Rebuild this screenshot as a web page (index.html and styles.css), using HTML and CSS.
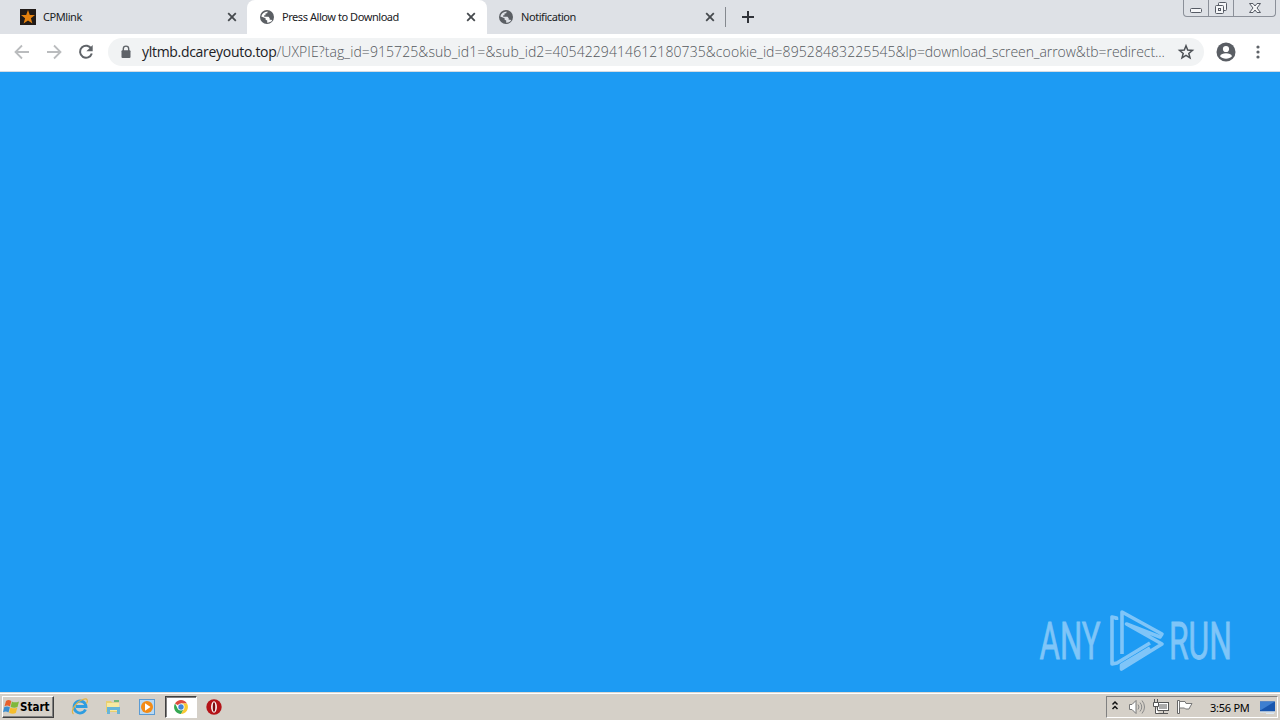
FILE: index.html
```html
<!DOCTYPE html>
<html lang="en">
<head>
    <meta charset="UTF-8">
    <meta name="viewport" content="width=device-width, initial-scale=1.0">
    <title>Press Allow to Download</title>
    <link rel="stylesheet" href="styles.css">
</head>
<body>

    <div class="tabs">
        <div class="tab tab-first">
            <svg class="favicon" viewBox="0 0 16 16"><rect width="16" height="16" fill="#211b18"/><path d="M8 1l1.8 4.9 5.2.2-4.1 3.2 1.5 5.2L8 11.5l-4.4 3 1.5-5.2L1 6.1l5.2-.2z" fill="#e5820f"/></svg>
            <span class="tab-title">CPMlink</span>
            <svg class="close" viewBox="0 0 10 10"><path d="M1.2 1.2l7.6 7.6M8.8 1.2L1.2 8.8"/></svg>
        </div>
        <div class="tab active">
            <svg class="favicon" viewBox="0 0 16 16"><circle cx="8" cy="8" r="7" fill="#5b5f64"/><path d="M2.300 7.500C3 4.600 5.200 2.600 8.700 2.500L8.200 4.200 6.500 4.600V6.300H5.200v1.500h4.300l1.200 1.400v1.500h1.700l.8.900c-1.100 1.400-2.900 2.100-5 2.100v-2.100L6.600 10.700V9.300z" fill="#fff"/></svg>
            <span class="tab-title">Press Allow to Download</span>
            <svg class="close" viewBox="0 0 10 10"><path d="M1.2 1.2l7.6 7.6M8.8 1.2L1.2 8.8"/></svg>
        </div>
        <div class="tab">
            <svg class="favicon" viewBox="0 0 16 16"><circle cx="8" cy="8" r="7" fill="#5b5f64"/><path d="M2.300 7.500C3 4.600 5.200 2.600 8.700 2.500L8.200 4.200 6.500 4.600V6.300H5.200v1.500h4.300l1.200 1.400v1.500h1.700l.8.900c-1.100 1.400-2.900 2.100-5 2.100v-2.100L6.600 10.700V9.300z" fill="#dee1e6"/></svg>
            <span class="tab-title">Notification</span>
            <svg class="close" viewBox="0 0 10 10"><path d="M1.2 1.2l7.6 7.6M8.8 1.2L1.2 8.8"/></svg>
        </div>
        <div class="separator"></div>
        <svg class="plus" viewBox="0 0 12 12"><path d="M6 0v12M0 6h12"/></svg>
        <div class="window-buttons">
            <div class="win-btn"><svg width="14" height="16" viewBox="0 0 14 16"><rect x="1.500" y="8.500" width="11" height="4" rx="1"/></svg></div>
            <div class="win-btn"><svg width="14" height="16" viewBox="0 0 14 16"><rect x="4.500" y="2.500" width="8" height="8" rx="1"/><rect x="1.500" y="5.500" width="8" height="8" rx="1"/><rect x="4.500" y="8.500" width="2" height="2"/></svg></div>
            <div class="win-btn win-close"><svg width="14" height="16" viewBox="0 0 14 16"><path d="M1.500 3.500h3.500l2 2.500 2-2.500h3.500L9 8l3.500 4.500H9L7 10l-2 2.500H1.500L5 8z"/></svg></div>
        </div>
    </div>

    <div class="toolbar">
        <svg class="nav disabled" viewBox="0 0 16 16"><path d="M15 8H2M8 1.500L1.500 8 8 14.500"/></svg>
        <svg class="nav disabled" viewBox="0 0 16 16"><path d="M1 8h13M8 1.500L14.500 8 8 14.500"/></svg>
        <svg class="nav" viewBox="0 0 16 16"><path d="M13.400 5A6 6 0 1 0 13.800 9.500"/><path class="solid" d="M14.700 1v6.300H8.400z"/></svg>
        <div class="address">
            <svg class="lock" viewBox="0 0 10 14"><path d="M2.300 6V3.800a2.700 2.700 0 0 1 5.400 0V6" fill="none" stroke="#5f6368" stroke-width="1.400"/><rect x="0.500" y="5.300" width="9" height="7.700" rx="1" fill="#5f6368"/></svg>
            <div class="url"><span class="domain">yltmb.dcareyouto.top</span><span class="path">/UXPIE?tag_id=915725&amp;sub_id1=&amp;sub_id2=4054229414612180735&amp;cookie_id=89528483225545<span class="path-end">&amp;lp=download_screen_arrow&amp;tb=redirect...</span></span></div>
            <svg class="star" viewBox="0 0 16 16"><path d="M8 1.800l1.700 4.300 4.700.3-3.600 3 1.200 4.500L8 11.400l-4 2.500 1.200-4.500-3.600-3 4.700-.3z"/></svg>
        </div>
        <svg class="profile" viewBox="0 0 20 20"><circle cx="10" cy="10" r="9.500" fill="#5a5e64"/><circle cx="10" cy="7" r="3.100" fill="#fff"/><path d="M4 14.200c1.300-3.800 10.700-3.800 12 0-2.600 3.300-9.400 3.300-12 0z" fill="#fff"/></svg>
        <svg class="menu" viewBox="0 0 4 16"><circle cx="2" cy="3" r="1.600"/><circle cx="2" cy="8" r="1.600"/><circle cx="2" cy="13" r="1.600"/></svg>
    </div>

    <div class="page">
        <svg class="watermark" viewBox="0 0 210 80">
            <g class="mark-text">
                <text x="9.500" y="59" textLength="61" lengthAdjust="spacingAndGlyphs">ANY</text>
                <text x="139" y="59" textLength="63" lengthAdjust="spacingAndGlyphs">RUN</text>
            </g>
            <path class="mark" d="M86.500 20V18L82 17V64L87 63 120 43M92 54V12L132 34L130 37 96.500 24L132 44 91.500 69V65L120 48"/>
        </svg>
    </div>

    <div class="taskbar">
        <div class="start">
            <svg width="17" height="16" viewBox="0 0 17 16"><path d="M3 2C5 .500 6.500 1 8.300 2L7 7.600C5 6.300 3.500 6.400 1.500 7.300z" fill="#e8602c"/><path d="M8.900 2.400c2 1.200 4.400 1.300 7.100 0L14.500 8c-2 1-4.800.9-6.900-.1z" fill="#7fb83c"/><path d="M1.300 8C3 7.200 5 7.100 6.900 8.200L5.500 13.500C3.500 12.200 2 12.300 0 13.200z" fill="#3b8ed0"/><path d="M7.400 8.500c2 1 4.300 1.200 6.900.2l-1.500 5.400c-2 1-4.700.9-6.700-.3z" fill="#f5bd2c"/></svg>
            <span>Start</span>
        </div>
        <div class="launch">
            <svg width="18" height="18" viewBox="0 0 18 18"><path d="M14.500 11.500A6 6 0 1 1 15 8.500H5" fill="none" stroke="#2f9de0" stroke-width="2.800"/><path d="M2.500 16C-1 13 5 4 12 1.500c5-1.800 5 1.500 3.500 4" fill="none" stroke="#e3b443" stroke-width="1.200"/></svg>
        </div>
        <div class="launch">
            <svg width="18" height="18" viewBox="0 0 18 18"><path d="M2 3h5l1 1.500h7V14H2z" fill="#e9cf70"/><path d="M3 5h12v8H3z" fill="#f8e9a0"/><path d="M3 16V9h13v7h-3v-4H6v4z" fill="#68b5d8"/><path d="M10 2h5v2h-5z" fill="#70b77b"/></svg>
        </div>
        <div class="launch">
            <svg width="18" height="18" viewBox="0 0 18 18"><rect x="1.500" y="1.500" width="15" height="15" fill="#b9d9f3" stroke="#5b9bd3"/><circle cx="9" cy="9" r="6" fill="#f38b16"/><path d="M7 5.200v7.600L12.500 9z" fill="#fff"/></svg>
        </div>
        <div class="launch pressed">
            <svg width="16" height="16" viewBox="0 0 16 16"><path d="M8 8L2 4.500A7 7 0 0 1 14 4.500H8z" fill="#dd4b3e"/><path d="M8 8l-3 2-3-5.500A7 7 0 0 0 8 15l3-5z" fill="#35a853"/><path d="M8 4.500h6A7 7 0 0 1 8 15l3-5.200z" fill="#f9c932"/><circle cx="8" cy="8" r="3.500" fill="#fff"/><circle cx="8" cy="8" r="2.700" fill="#4285d8"/></svg>
        </div>
        <div class="launch">
            <svg width="16" height="16" viewBox="0 0 16 16"><circle cx="8" cy="8" r="7.700" fill="#b41318"/><ellipse cx="8" cy="8" rx="2.900" ry="5.800" fill="#fff"/><ellipse cx="8" cy="8" rx="1.300" ry="4.700" fill="#7d0c10"/></svg>
        </div>
        <div class="tray">
            <svg class="chevrons" width="8" height="12" viewBox="0 0 8 12"><path d="M1.500 4.500L4 2l2.500 2.500M1.500 9L4 6.500 6.500 9" fill="none" stroke="#111" stroke-width="1.500"/></svg>
            <svg class="sound" width="18" height="16" viewBox="0 0 18 16"><path d="M1.500 5.500H4l4-4v13l-4-4H1.500z" fill="#fff" stroke="#777"/><path d="M10 5.500q2 2.500 0 5M12 3.500q3.500 4.500 0 9M14 1.500q5 6.500 0 13" fill="none" stroke="#888"/></svg>
            <svg class="network" width="18" height="16" viewBox="0 0 18 16"><rect x="5.500" y="3.500" width="11" height="8" fill="#fff" stroke="#555"/><rect x="7" y="5" width="8" height="5" fill="#aaa"/><path d="M7 14.500h9M11.500 12v2" stroke="#555"/><path d="M2.500 0v3M5.500 0v3M1.500 3.500h5v4h-5zM3.500 8v6.500H7" fill="#fff" stroke="#555"/></svg>
            <svg class="flag" width="18" height="16" viewBox="0 0 18 16"><path d="M1.500 1.500h2v13h-2z" fill="#fff" stroke="#666"/><path d="M3.500 2.500H9l1 2h6l-2 3.500-1 2h-3.500l-1-1h-5z" fill="#fff" stroke="#777"/></svg>
            <span class="clock">3:56 PM</span>
            <svg width="17" height="14" viewBox="0 0 17 14"><path d="M1 1.500h15v10H1z" fill="#1856ae"/><path d="M1 1.500h15L2 10H1z" fill="#3e7fd0"/><path d="M1 12h15M7 13.500h8" stroke="#d9e7f4"/></svg>
        </div>
    </div>

</body>
</html>
```
FILE: styles.css
```css
* {
    box-sizing: border-box;
}

body {
    margin: 0;
    height: 720px;
    display: flex;
    flex-direction: column;
    overflow: hidden;
    background: #1d9bf3;
    font-family: "Noto Sans", sans-serif;
    color: #202124;
}

svg {
    flex: none;
    display: block;
    overflow: visible;
}

.tabs {
    height: 34px;
    flex: none;
    display: flex;
    align-items: center;
    background: #dee1e6;
}

.tab {
    width: 239px;
    height: 34px;
    display: flex;
    align-items: center;
    padding: 0 11px;
}

.tab-first {
    width: 247px;
    padding: 0 10px 0 20px;
}

.tab.active {
    width: 240px;
    padding: 0 11px 0 12px;
    background: #fff;
    border-radius: 8px 8px 0 0;
}

.favicon {
    width: 16px;
    height: 16px;
}

.tab-title {
    flex: 1;
    margin-left: 7px;
    padding-bottom: 2px;
    font-size: 11px;
    letter-spacing: -0.44px;
    white-space: nowrap;
}

.close {
    width: 10px;
    height: 10px;
    fill: none;
    stroke: #45494d;
    stroke-width: 1.8;
}

.separator {
    width: 1px;
    height: 20px;
    margin-left: -1px;
    background: #85898f;
}

.plus {
    width: 12px;
    height: 12px;
    margin-left: 16px;
    stroke: #303339;
    stroke-width: 2;
}

.window-buttons {
    display: flex;
    align-self: flex-start;
    width: 93px;
    height: 17px;
    margin-left: auto;
    margin-right: 4px;
    border: 1px solid #8b9099;
    border-top: 0;
    border-radius: 0 0 4px 4px;
}

.win-btn {
    width: 25px;
    display: flex;
    justify-content: center;
    border-right: 1px solid #8b9099;
}

.win-btn svg {
    fill: #f5f6f8;
    stroke: #565b65;
}

.win-close {
    flex: 1;
    border-right: 0;
}

.toolbar {
    height: 38px;
    flex: none;
    display: flex;
    align-items: center;
    padding: 0 20px 1px 14px;
    background: #fff;
    border-bottom: 1px solid #d5dce3;
}

.nav {
    width: 16px;
    height: 16px;
    margin-right: 16px;
    fill: none;
    stroke: #5f6368;
    stroke-width: 2;
}

.nav.disabled {
    stroke: #babcbe;
    stroke-width: 1.8;
}

.solid {
    fill: #5f6368;
    stroke: none;
}

.address {
    width: 1096px;
    height: 28px;
    margin-left: -2px;
    display: flex;
    align-items: center;
    padding: 0 10px 0 13px;
    border-radius: 14px;
    background: #f1f3f4;
}

.lock {
    width: 10px;
    height: 14px;
}

.url {
    flex: 1;
    margin-left: 11px;
    padding-bottom: 1px;
    font-family: "Open Sans", sans-serif;
    font-size: 14px;
    white-space: nowrap;
}

.domain {
    letter-spacing: -0.3px;
}

.path {
    color: #53575c;
    font-weight: 300;
    letter-spacing: 0.08px;
}

.path-end {
    letter-spacing: -0.07px;
}

.star {
    width: 16px;
    height: 16px;
    fill: none;
    stroke: #4d5156;
    stroke-width: 1.5;
}

.profile {
    width: 20px;
    height: 20px;
    margin-left: 12px;
}

.menu {
    width: 4px;
    height: 16px;
    margin-left: auto;
    fill: #5f6368;
}

.page {
    flex: 1;
    display: flex;
    align-items: flex-end;
    justify-content: flex-end;
    padding: 0 40px 12px 0;
    background: #1d9bf3;
}

.watermark {
    width: 210px;
    height: 80px;
}

.mark-text {
    font-family: Roboto, sans-serif;
    font-size: 51px;
    fill: #7fc5f8;
    stroke: #7fc5f8;
    stroke-width: 0.8;
}

.mark {
    fill: none;
    stroke: #7fc5f8;
    stroke-width: 3.6;
    stroke-linejoin: round;
}

.taskbar {
    height: 28px;
    flex: none;
    display: flex;
    align-items: center;
    padding: 1px 2px 0;
    background: #d5d0c8;
    border-top: 1px solid #dcd9d3;
    box-shadow: inset 0 1px #fff;
}

.start {
    width: 52px;
    height: 22px;
    margin-right: 9.500px;
    display: flex;
    align-items: center;
    border: 1px solid;
    border-color: #fff #404040 #404040 #fff;
    box-shadow: inset -1px -1px #808080;
    font-family: "DejaVu Sans Condensed", "DejaVu Sans", sans-serif;
    font-size: 11.500px;
    font-weight: bold;
    color: #000;
}

.launch {
    width: 32px;
    height: 22px;
    margin-right: 1.700px;
    display: flex;
    align-items: center;
    justify-content: center;
}

.pressed {
    background: #fff;
    border: 1px solid;
    border-color: #404040 #fff #fff #404040;
    box-shadow: inset 1px 1px #808080;
}

.tray {
    width: 172px;
    height: 22px;
    margin-left: auto;
    display: flex;
    align-items: center;
    padding: 0 1px 0 4px;
    border: 1px solid;
    border-color: #808080 #fff #fff #808080;
}

.chevrons {
    margin-bottom: 3px;
}

.sound {
    margin-left: 9px;
}

.network {
    margin-left: 6px;
}

.flag {
    margin-left: 6px;
}

.clock {
    flex: 1;
    margin-left: 16px;
    font-size: 11px;
    letter-spacing: -0.25px;
    white-space: nowrap;
    color: #000;
}
```
